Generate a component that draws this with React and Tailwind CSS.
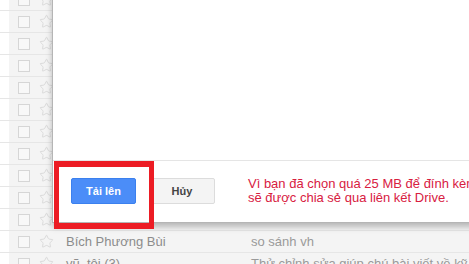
import { Star } from "lucide-react"

const rows = [
  {}, {}, {}, {}, {}, {}, {}, {}, {}, {}, {},
  { from: "Bích Phương Bùi", subject: "so sánh vh" },
  { from: "vũ, tôi (3)", subject: "Thử chỉnh sửa giúp chú bài viết về kỹ thuật" },
]

function Row({ from, subject }) {
  return (
    <div className="flex h-[22px] items-center border-b border-[#e6e6e6] bg-[#f4f4f4]">
      <div className="h-full w-[9px] shrink-0 bg-white" />
      <div className="ml-[9px] h-[12px] w-[12px] shrink-0 border border-[#d6d6d6] bg-[#f8f8f8]" />
      <Star className="ml-[9px] shrink-0 text-[#d4d4d4]" size={15} strokeWidth={1.3} />
      {from && (
        <>
          <span className="ml-[12px] w-[185px] shrink-0 whitespace-nowrap text-[13px] text-[#8c8c8c]">{from}</span>
          <span className="whitespace-nowrap text-[13px] text-[#9a9a9a]">{subject}</span>
        </>
      )}
    </div>
  )
}

export default function App() {
  return (
    <div className="relative h-[264px] w-[469px] overflow-hidden bg-white font-['Liberation_Sans',Arial,sans-serif]">
      <div className="mt-[-11px]">
        {rows.map((r, i) => (
          <Row key={i} {...r} />
        ))}
      </div>

      {/* upload dialog */}
      <div className="absolute left-[52px] top-[-20px] flex h-[243px] w-[440px] flex-col border border-[#b5b5b5] bg-white shadow-[0_4px_6px_rgba(0,0,0,0.25)]">
        <div className="flex-1" />
        <div className="flex h-[62px] items-start border-t border-[#e5e5e5] pl-[18px] pt-[17px]">
          <button className="h-[26px] w-[65px] shrink-0 whitespace-nowrap rounded-[2px] border border-[#3b80ee] bg-[#4b8df8] text-[11px] font-bold text-white">
            Tải lên
          </button>
          <button className="ml-[13px] h-[26px] w-[66px] shrink-0 whitespace-nowrap rounded-[2px] border border-[#dcdcdc] bg-[#f4f4f4] text-[11px] font-bold text-[#444]">
            Hủy
          </button>
          <p className="ml-[33px] mt-[-1px] shrink-0 whitespace-nowrap text-[13px] leading-[14px] text-[#d8203f]">
            Vì bạn đã chọn quá 25 MB để đính kèm vào thư, tệp của bạn
            <br />
            sẽ được chia sẻ qua liên kết Drive.
          </p>
        </div>
      </div>

      {/* highlight around the upload button */}
      <div className="absolute left-[54px] top-[161px] h-[68px] w-[100px] border-x-[5px] border-y-[6px] border-[#ec1c24]" />
    </div>
  )
}
